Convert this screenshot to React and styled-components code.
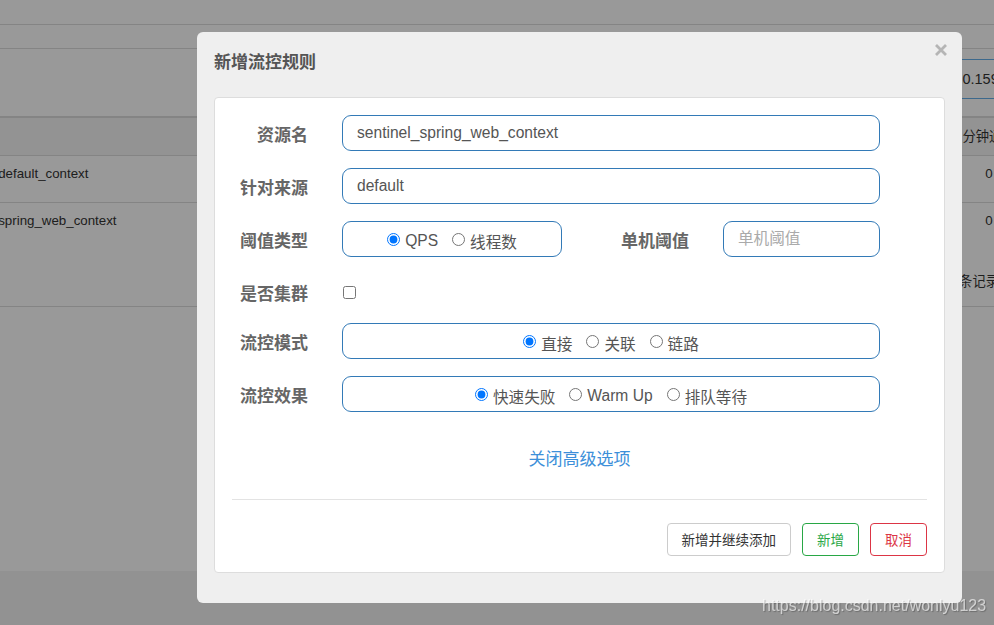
import React from 'react';
import styled, { createGlobalStyle } from 'styled-components';

const GlobalStyle = createGlobalStyle`
  html, body {
    margin: 0;
    height: 100%;
    overflow: hidden;
  }
  body {
    font-family: "Liberation Sans", "Noto Sans CJK SC", sans-serif;
    background: #fff;
    color: #333;
  }
`;

const Shell = styled.div`
  height: 100vh;
  display: flex;
  flex-direction: column;
`;

const Page = styled.div`
  height: 571px;
  background: #fff;
  flex-shrink: 0;
`;

const PageFoot = styled.div`
  flex: 1;
  background: #f4f4f4;
`;

const TopBar = styled.div`
  height: 24px;
  border-bottom: 1px solid #ddd;
`;

const Crumb = styled.div`
  height: 23px;
  border-bottom: 1px solid #ddd;
`;

const SearchRow = styled.div`
  height: 67px;
  display: flex;
  justify-content: flex-end;
  align-items: flex-start;
  padding-top: 10px;
  box-sizing: border-box;
  margin-right: -89px;
`;

const SearchInput = styled.input`
  width: 190px;
  height: 40px;
  box-sizing: border-box;
  border: 1px solid #66afe9;
  border-radius: 4px;
  padding: 0 12px;
  font-family: inherit;
  font-size: 14.5px;
  color: #333;
  outline: none;
`;

const Table = styled.div`
  margin-left: -55px;
  margin-right: -35px;
  font-size: 13.3px;
  color: #333;
`;

const Row = styled.div`
  display: grid;
  grid-template-columns: 1fr 80px;
  height: ${p => p.$h}px;
  box-sizing: border-box;
  align-items: ${p => (p.$head ? 'center' : 'start')};
  padding-top: ${p => (p.$head ? 0 : 10)}px;
  line-height: 16px;
  background: ${p => (p.$head ? '#f5f5f5' : 'transparent')};
  border-top: ${p => (p.$head ? '2px solid #ddd' : 'none')};
  border-bottom: ${p => (p.$line ? '1px solid #ddd' : 'none')};
`;

const Cell = styled.div`
  text-align: ${p => p.$align || 'left'};
  white-space: nowrap;
`;

const Pager = styled.div`
  height: 57px;
  border-bottom: 1px solid #ddd;
  display: flex;
  justify-content: flex-end;
  align-items: center;
  padding-top: 4px;
  box-sizing: border-box;
  margin-right: -5px;
  font-size: 13.3px;
  color: #333;
`;

const Overlay = styled.div`
  position: fixed;
  inset: 0;
  background: rgba(0, 0, 0, 0.4);
`;

const Modal = styled.div`
  position: fixed;
  left: 197px;
  top: 32px;
  width: 765px;
  height: 571px;
  box-sizing: border-box;
  padding: 0 17px;
  background: #efefef;
  border-radius: 6px;
  display: flex;
  flex-direction: column;
`;

const ModalHeader = styled.div`
  height: 65px;
  box-sizing: border-box;
  padding-top: 19px;
`;

const Title = styled.h4`
  margin: 0;
  font-size: 17px;
  line-height: 24px;
  font-weight: bold;
  color: #555;
`;

const CloseButton = styled.button`
  position: absolute;
  top: 12px;
  right: 15px;
  width: 12px;
  height: 12px;
  padding: 0;
  border: none;
  background: none;
  cursor: pointer;
  display: flex;
`;

const Panel = styled.div`
  height: 476px;
  box-sizing: border-box;
  background: #fff;
  border: 1px solid #ddd;
  border-radius: 4px;
  padding: 17px 17px 16px;
  display: flex;
  flex-direction: column;
`;

const Form = styled.div`
  display: flex;
  flex-direction: column;
  gap: 17px;
`;

const FieldRow = styled.div`
  display: flex;
  align-items: center;
  height: ${p => (p.$compact ? 32 : 36)}px;
  margin: ${p => (p.$compact ? '2px 0 -2px' : '0')};
`;

const Label = styled.label`
  width: ${p => p.$w || 76}px;
  flex-shrink: 0;
  margin-right: 34px;
  padding-top: 5px;
  text-align: right;
  white-space: nowrap;
  font-size: 17px;
  line-height: 20px;
  font-weight: bold;
  color: #666;
`;

const TextBox = styled.input`
  width: ${p => p.$w || 538}px;
  height: 36px;
  box-sizing: border-box;
  border: 1px solid #337ab7;
  border-radius: 9px;
  padding: 0 14px;
  font-family: inherit;
  font-size: 15.6px;
  color: #555;
  background: #fff;
  outline: none;

  &::placeholder {
    color: #aaa;
  }
`;

const RadioBox = styled.div`
  width: ${p => p.$w || 538}px;
  height: 36px;
  box-sizing: border-box;
  border: 1px solid #337ab7;
  border-radius: 9px;
  display: flex;
  align-items: center;
  justify-content: center;
  gap: 14px;
  padding-top: 3px;
  font-size: 15.6px;
  color: #555;
`;

const RadioItem = styled.label`
  display: inline-flex;
  align-items: center;
  gap: 5px;
  white-space: nowrap;
`;

const Radio = styled.input`
  margin: 0 0 2px;
  width: 13px;
  height: 13px;
`;

const Check = styled.input`
  margin: 0 0 0 1px;
  width: 13px;
  height: 13px;
`;

const ToggleLink = styled.a`
  align-self: center;
  margin-top: 38px;
  font-size: 17px;
  line-height: 20px;
  color: #3d8fd9;
  text-decoration: none;
  cursor: pointer;
`;

const Divider = styled.div`
  margin-top: 29px;
  height: 1px;
  background: #e3e3e3;
`;

const Footer = styled.div`
  margin-top: 23px;
  display: flex;
  justify-content: flex-end;
  gap: 11px;
`;

const Button = styled.button`
  height: 33px;
  padding: 0 14px 2px;
  background: #fff;
  border: 1px solid ${p => p.$tone};
  border-radius: 4px;
  font-family: inherit;
  font-size: 13.5px;
  color: ${p => p.$text || p.$tone};
  cursor: pointer;
`;

const Watermark = styled.div`
  position: fixed;
  left: 762px;
  top: 597px;
  font-size: 16px;
  line-height: 18px;
  color: rgba(255, 255, 255, 0.62);
  text-shadow: 1px 1px 1px rgba(0, 0, 0, 0.25);
  white-space: nowrap;
`;

const RadioGroup = ({ name, options, checked, w }) => (
  <RadioBox $w={w}>
    {options.map(o => (
      <RadioItem key={o}>
        <Radio type="radio" name={name} defaultChecked={o === checked} />
        {o}
      </RadioItem>
    ))}
  </RadioBox>
);

export default function App() {
  return (
    <>
      <GlobalStyle />
      <Shell>
        <Page>
          <TopBar />
          <Crumb />
          <SearchRow>
            <SearchInput defaultValue="192.168.0.159:8719" readOnly />
          </SearchRow>
          <Table>
            <Row $head $line $h={40}>
              <Cell>资源名</Cell>
              <Cell $align="center">分钟通过</Cell>
            </Row>
            <Row $line $h={47}>
              <Cell>sentinel_default_context</Cell>
              <Cell $align="center">0</Cell>
            </Row>
            <Row $h={47}>
              <Cell>sentinel_spring_web_context</Cell>
              <Cell $align="center">0</Cell>
            </Row>
          </Table>
          <Pager>共 2 条记录</Pager>
        </Page>
        <PageFoot />
      </Shell>

      <Overlay />

      <Modal>
        <ModalHeader>
          <Title>新增流控规则</Title>
          <CloseButton aria-label="close">
            <svg width="12" height="12" viewBox="0 0 12 12">
              <path d="M1 1 L11 11 M11 1 L1 11" stroke="#b5b5b5" strokeWidth="2.8" strokeLinecap="butt" />
            </svg>
          </CloseButton>
        </ModalHeader>
        <Panel>
          <Form>
            <FieldRow>
              <Label>资源名</Label>
              <TextBox defaultValue="sentinel_spring_web_context" />
            </FieldRow>
            <FieldRow>
              <Label>针对来源</Label>
              <TextBox defaultValue="default" />
            </FieldRow>
            <FieldRow>
              <Label>阈值类型</Label>
              <RadioGroup name="grade" options={['QPS', '线程数']} checked="QPS" w={220} />
              <Label $w={127}>单机阈值</Label>
              <TextBox $w={157} placeholder="单机阈值" />
            </FieldRow>
            <FieldRow $compact>
              <Label>是否集群</Label>
              <Check type="checkbox" />
            </FieldRow>
            <FieldRow>
              <Label>流控模式</Label>
              <RadioGroup name="strategy" options={['直接', '关联', '链路']} checked="直接" />
            </FieldRow>
            <FieldRow>
              <Label>流控效果</Label>
              <RadioGroup name="behavior" options={['快速失败', 'Warm Up', '排队等待']} checked="快速失败" />
            </FieldRow>
          </Form>
          <ToggleLink>关闭高级选项</ToggleLink>
          <Divider />
          <Footer>
            <Button $tone="#ccc" $text="#333">新增并继续添加</Button>
            <Button $tone="#28a745">新增</Button>
            <Button $tone="#dc3545">取消</Button>
          </Footer>
        </Panel>
      </Modal>

      <Watermark>https://blog.csdn.net/wonlyu123</Watermark>
    </>
  );
}
